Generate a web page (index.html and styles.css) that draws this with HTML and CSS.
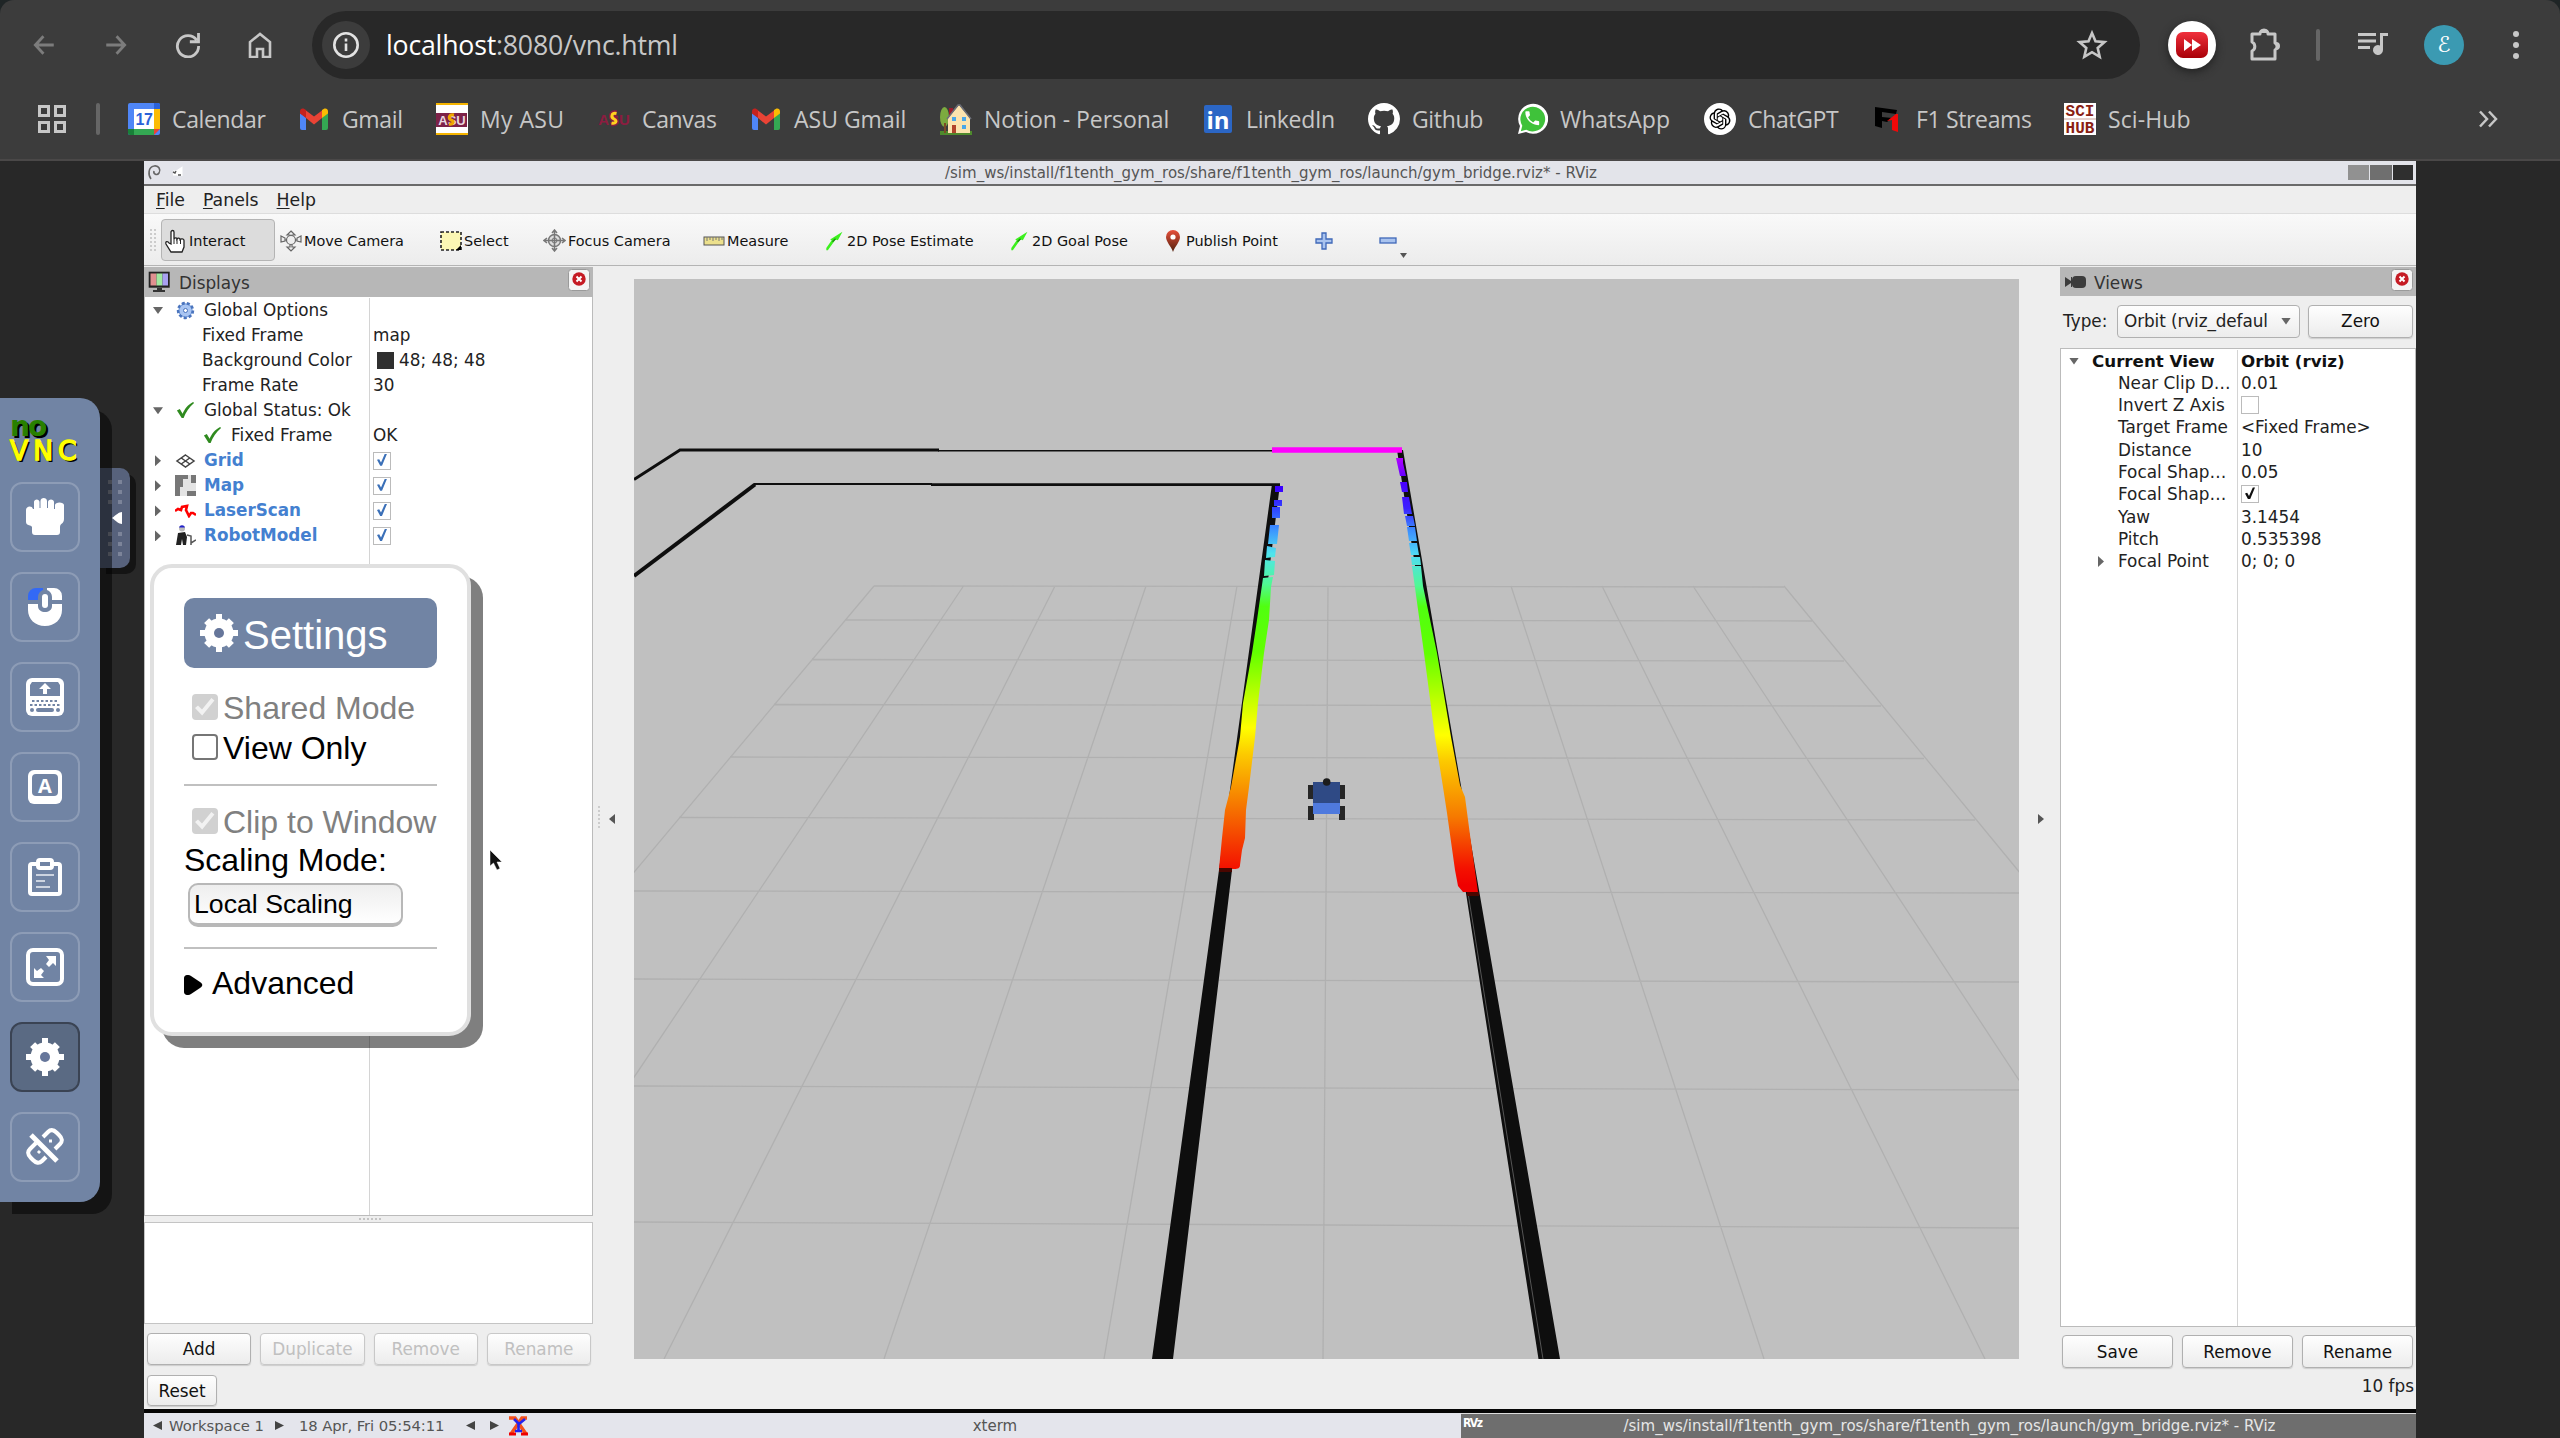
FILE: index.html
```html
<!DOCTYPE html>
<html lang="en">
<head>
<meta charset="utf-8">
<title>noVNC</title>
<link rel="stylesheet" href="styles.css">
</head>
<body>
<svg class="defs" width="0" height="0">
  <defs>
    <symbol id="gmail" viewBox="0 0 32 32">
      <path fill="#4f86f7" d="M2 10l6 4.5V27H4a2 2 0 0 1-2-2z"/>
      <path fill="#34a853" d="M24 14.500l6-4.500V25a2 2 0 0 1-2 2h-4z"/>
      <path fill="#ea4335" d="M8 7.500l8 6 8-6v7.500l-8 6.500L8 15z"/>
      <path fill="#c5221f" d="M2 8.500C2 5 5.500 4.500 8 7v8L2 10.500z"/>
      <path fill="#fbbc04" d="M30 8.500C30 5 26.500 4.500 24 7v8l6-4.500z"/>
    </symbol>
    <symbol id="gear" viewBox="0 0 38 38">
      <g fill="#fff"><rect x="16" y="0" width="6" height="38"/><rect x="0" y="16" width="38" height="6"/>
      <rect x="15.500" y="1.500" width="7" height="35" transform="rotate(45 19 19)"/><rect x="15.500" y="1.500" width="7" height="35" transform="rotate(-45 19 19)"/>
      <circle cx="19" cy="19" r="14.500"/></g>
      <circle class="gear-hole" cx="19" cy="19" r="5"/>
    </symbol>
    <symbol id="close" viewBox="0 0 22 22">
      <rect x=".5" y=".5" width="21" height="21" rx="3" fill="#f4f4f4" stroke="#9a9a9a"/>
      <circle cx="11" cy="10" r="6.700" fill="#c51b24"/><path d="M8.500 7.500l5 5m0-5l-5 5" stroke="#fff" stroke-width="2"/>
    </symbol>
    <symbol id="tick" viewBox="0 0 20 20"><path d="M1 10l3-1.500 3 5C9 8.500 12 4 18 1l1 1C14 6 10 12 8 18H6z" fill="#2f8a1f"/></symbol>
    <symbol id="arrow" viewBox="0 0 22 26"><path d="M1 22l7-10-2-1L22 1l-6 11-3-1L3 25H1z" fill="#3cf01e"/><path d="M9 14l4-4" stroke="#1f8f12" stroke-width="2"/></symbol>
  </defs>
</svg>

<header class="chrome">
  <div class="nav">
    <svg class="nav-icon dim" viewBox="0 0 24 24"><path d="M21 12H4M11.500 4L4 12l7.500 8"/></svg>
    <svg class="nav-icon dim" viewBox="0 0 24 24"><path d="M3 12h17M12.500 4L20 12l-7.500 8"/></svg>
    <svg class="nav-icon" viewBox="0 0 24 24"><path d="M20 7.500A9.800 9.800 0 1 0 21.800 13M21.700 1v8h-8"/></svg>
    <svg class="nav-icon" viewBox="0 0 24 26"><path d="M2 25V10l10-8 10 8v15h-7v-8H9v8z"/></svg>
    <div class="address">
      <span class="info"><svg width="28" height="28" viewBox="0 0 28 28" fill="none" stroke="#e3e3e3" stroke-width="2.600"><circle cx="14" cy="14" r="11.700"/><path d="M14 12.500V20M14 7.500v3"/></svg></span>
      <span class="url"><b>localhost</b>:8080/vnc.html</span>
      <svg class="star" width="32" height="32" viewBox="0 0 32 32" fill="none" stroke="#c7c7c7" stroke-width="2.600"><path d="M16 4l3.500 8.300 9 .8-6.800 5.900 2 8.800L16 23.200l-7.700 4.600 2-8.800-6.800-5.900 9-.8z"/></svg>
    </div>
    <div class="tools">
      <span class="ext"><svg width="32" height="26" viewBox="0 0 32 26"><defs><linearGradient id="yt" x2="0" y2="1"><stop stop-color="#f0303c"/><stop offset="1" stop-color="#a80008"/></linearGradient></defs><rect width="32" height="26" rx="7" fill="url(#yt)"/><path d="M8 7l8 6-8 6zM16 7l9 6-9 6z" fill="#fff"/></svg></span>
      <svg class="puzzle" width="34" height="34" viewBox="0 0 34 34"><path d="M4 7h8a4 4 0 0 1 8 0h7v9a4 4 0 0 1 0 7v9H4v-8a5 5 0 0 0 0-9z" fill="none" stroke="#c7c7c7" stroke-width="3" stroke-linejoin="round"/><path d="M12 6a4 4 0 0 1 8 0zM28 15a4 4 0 0 1 0 8z" fill="#c7c7c7"/></svg>
      <i class="bar"></i>
      <svg class="media" width="30" height="24" viewBox="0 0 30 24" fill="#c7c7c7"><path d="M0 0h18v3H0zM0 6.500h18v3H0zM0 13h12v3H0zM22 0h8v3h-5v14a5 5 0 1 1-3-4.600z"/></svg>
      <span class="avatar">ℰ</span>
      <svg class="dots" width="8" height="30" viewBox="0 0 8 30" fill="#c7c7c7"><circle cx="4" cy="4" r="3"/><circle cx="4" cy="15" r="3"/><circle cx="4" cy="26" r="3"/></svg>
    </div>
  </div>
  <nav class="bookmarks">
    <svg class="apps" width="28" height="28" viewBox="0 0 28 28" fill="none" stroke="#c7c7c7" stroke-width="3"><path d="M1.500 1.500h9v9h-9zM17.500 1.500h9v9h-9zM1.500 17.500h9v9h-9zM17.500 17.500h9v9h-9z"/></svg>
    <i class="bar"></i>
    <div class="marks">
      <a><svg viewBox="0 0 32 32"><rect width="32" height="32" rx="2" fill="#4f86f7"/><path d="M26 0h4a2 2 0 0 1 2 2v4h-6z" fill="#2b62d9"/><path d="M26 6h6v20h-6z" fill="#fbbc04"/><path d="M6 26h20v6H6z" fill="#34a853"/><path d="M0 26h6v6H2a2 2 0 0 1-2-2z" fill="#188038"/><path d="M26 26h6l-6 6z" fill="#ea4335"/><rect x="6" y="6" width="20" height="20" fill="#fff"/><text x="16" y="22" class="cal">17</text></svg>Calendar</a>
      <a><svg><use href="#gmail"/></svg>Gmail</a>
      <a><svg viewBox="0 0 32 32"><rect width="32" height="32" fill="#fff"/><path d="M0 0h32v2H0zM0 30h32v2H0z" fill="#f5b400"/><rect y="10" width="31" height="14" fill="#7d2248"/><text x="16" y="22" class="asu" fill="#e9d7df">ASU</text><path d="M18 12c-5-1-6 3-3 5 4 1 2 5-2 4" fill="none" stroke="#f0a800" stroke-width="3"/></svg>My ASU</a>
      <a><svg viewBox="0 0 32 32"><text x="16" y="22" class="asu wide" fill="#8c1d40">ASU</text><path d="M18.500 10.500c-5-1-6 3.500-2.500 5.500 4 2 1.500 5-2.500 4" fill="none" stroke="#8c1d40" stroke-width="6"/><path d="M18.500 10.500c-5-1-6 3.500-2.500 5.500 4 2 1.500 5-2.500 4" fill="none" stroke="#ffd21f" stroke-width="3"/></svg>Canvas</a>
      <a><svg><use href="#gmail"/></svg>ASU Gmail</a>
      <a><svg viewBox="0 0 32 32"><path d="M0 28h32v4H0z" fill="#4e8a2c"/><ellipse cx="4.500" cy="14" rx="4.500" ry="10" fill="#7cab3f"/><path d="M4 20h2v10H4z" fill="#7b4a26"/><path d="M9 5h4v7H9z" fill="#9c1c2c"/><path d="M8 15L19 2l11 13v15H8z" fill="#fbe3ae"/><path d="M7 16L18 2l2 0 11 14" fill="none" stroke="#6c6f78" stroke-width="1.500"/><path d="M12 14h4v4h-4zM22 14h4v4h-4zM22 22h4v4h-4z" fill="#4aa7e8"/><path d="M12 22h4v8h-4z" fill="#b0432b"/></svg>Notion - Personal</a>
      <a><svg viewBox="0 0 32 32"><rect x="2" y="2" width="28" height="28" rx="2" fill="#2b66c5"/><text x="16" y="26" class="li">in</text></svg>LinkedIn</a>
      <a><svg viewBox="0 0 16 16"><path fill="#fff" d="M8 0C3.580 0 0 3.580 0 8c0 3.540 2.290 6.530 5.470 7.590.4.070.55-.17.55-.38 0-.19-.01-.82-.01-1.490-2.010.37-2.530-.49-2.690-.94-.09-.23-.48-.94-.82-1.130-.28-.15-.68-.52-.01-.53.63-.01 1.080.58 1.230.82.72 1.210 1.870.87 2.330.66.07-.52.28-.87.51-1.070-1.780-.2-3.640-.89-3.640-3.950 0-.87.31-1.590.82-2.150-.08-.2-.36-1.020.08-2.120 0 0 .67-.21 2.200.82.64-.18 1.320-.27 2-.27s1.360.09 2 .27c1.530-1.040 2.200-.82 2.200-.82.44 1.100.16 1.920.08 2.120.51.56.82 1.270.82 2.150 0 3.070-1.870 3.750-3.650 3.950.29.25.54.73.54 1.480 0 1.070-.01 1.930-.01 2.200 0 .21.15.46.55.38A8.010 8.010 0 0 0 16 8c0-4.420-3.580-8-8-8z"/></svg>Github</a>
      <a><svg viewBox="0 0 32 32"><path d="M2 31l2-8A15 15 0 1 1 10 29z" fill="#fff"/><path d="M4.800 28.200l1.500-5.500A12.400 12.400 0 1 1 10.400 26.700z" fill="#3fc23a"/><path transform="translate(7 6) scale(.77)" fill="#fff" d="M6.620 10.790c1.440 2.830 3.760 5.140 6.590 6.590l2.200-2.200c.27-.27.67-.36 1.020-.24 1.120.37 2.330.57 3.570.57.55 0 1 .45 1 1V20c0 .55-.45 1-1 1-9.390 0-17-7.610-17-17 0-.55.45-1 1-1h3.500c.55 0 1 .45 1 1 0 1.250.2 2.450.57 3.570.11.35.03.74-.25 1.020z"/></svg>WhatsApp</a>
      <a><svg viewBox="0 0 32 32"><circle cx="16" cy="16" r="16" fill="#fff"/><path transform="translate(5.500 5.500) scale(.875)" d="M22.2819 9.8211a5.9847 5.9847 0 0 0-.5157-4.9108 6.0462 6.0462 0 0 0-6.5098-2.9A6.0651 6.0651 0 0 0 4.9807 4.1818a5.9847 5.9847 0 0 0-3.9977 2.9 6.0462 6.0462 0 0 0 .7427 7.0966 5.98 5.98 0 0 0 .511 4.9107 6.051 6.051 0 0 0 6.5146 2.9001A5.9847 5.9847 0 0 0 13.2599 24a6.0557 6.0557 0 0 0 5.7718-4.2058 5.9894 5.9894 0 0 0 3.9977-2.9001 6.0557 6.0557 0 0 0-.7475-7.0729zm-9.022 12.6081a4.4755 4.4755 0 0 1-2.8764-1.0408l.1419-.0804 4.7783-2.7582a.7948.7948 0 0 0 .3927-.6813v-6.7369l2.02 1.1686a.071.071 0 0 1 .038.052v5.5826a4.504 4.504 0 0 1-4.4945 4.4944zm-9.6607-4.1254a4.4708 4.4708 0 0 1-.5346-3.0137l.142.0852 4.783 2.7582a.7712.7712 0 0 0 .7806 0l5.8428-3.3685v2.3324a.0804.0804 0 0 1-.0332.0615L9.74 19.9502a4.4992 4.4992 0 0 1-6.1408-1.6464zM2.3408 7.8956a4.485 4.485 0 0 1 2.3655-1.9728V11.6a.7664.7664 0 0 0 .3879.6765l5.8144 3.3543-2.0201 1.1685a.0757.0757 0 0 1-.071 0l-4.8303-2.7865A4.504 4.504 0 0 1 2.3408 7.872zm16.5963 3.8558L13.1038 8.364 15.1192 7.2a.0757.0757 0 0 1 .071 0l4.8303 2.7913a4.4944 4.4944 0 0 1-.6765 8.1042v-5.6772a.79.79 0 0 0-.407-.667zm2.0107-3.0231l-.142-.0852-4.7735-2.7818a.7759.7759 0 0 0-.7854 0L9.409 9.2297V6.8974a.0662.0662 0 0 1 .0284-.0615l4.8303-2.7866a4.4992 4.4992 0 0 1 6.6802 4.66zM8.3065 12.863l-2.02-1.1638a.0804.0804 0 0 1-.038-.0567V6.0742a4.4992 4.4992 0 0 1 7.3757-3.4537l-.142.0805L8.704 5.459a.7948.7948 0 0 0-.3927.6813zm1.0976-2.3654l2.602-1.4998 2.6069 1.4998v2.9994l-2.5974 1.4997-2.6067-1.4997Z"/></svg>ChatGPT</a>
      <a><svg viewBox="0 0 32 32"><path d="M3 4l22 3-1 4-14-2v5l10 1-5 4-5-1v7l-7-2z" fill="#000"/><path d="M15 18l9-7h2v18l-6-2V17z" fill="#f00808"/></svg>F1 Streams</a>
      <a><svg viewBox="0 0 32 32"><rect width="32" height="32" fill="#fff"/><path d="M0 16h32" stroke="#caa29a"/><text x="16" y="12.500" class="sci">SCI</text><text x="16" y="30" class="sci">HUB</text></svg>Sci-Hub</a>
    </div>
    <svg class="more" width="20" height="18" viewBox="0 0 20 18" fill="none" stroke="#c7c7c7" stroke-width="2.500"><path d="M2 1.500L9 9l-7 7.500M11 1.500L18 9l-7 7.500"/></svg>
  </nav>
</header>

<main class="viewport">
  <div class="desktop">
    <div class="titlebar">
      <svg class="debian" width="46" height="20" viewBox="0 0 46 20" fill="none"><path d="M4 16C1 12 1 4 7 3c5-1 7 4 5 7-2 3-6 1-5-2" stroke="#666" stroke-width="1.600"/><path d="M26 10h4l3-2v5" stroke="#fff" stroke-width="5"/><path d="M26 9l2 1 1-2M31 12h3" stroke="#555" stroke-width="1.400"/></svg>
      <span>/sim_ws/install/f1tenth_gym_ros/share/f1tenth_gym_ros/launch/gym_bridge.rviz* - RViz</span>
      <div class="winbtns"><i></i><i></i><i></i></div>
    </div>
    <div class="menubar"><span><u>F</u>ile</span><span><u>P</u>anels</span><span><u>H</u>elp</span></div>
    <div class="toolbar">
      <i class="grip"></i>
      <span class="tool on t1"><svg width="23" height="24" viewBox="0 0 23 24"><path d="M7 15V3c0-2 3-2 3 0v7c1-2 3-1 3 0 1-1.500 3-1 3 .5 1-1 4-1 4 1V18l-2 5H7L2 15c-1-3 2-3 3-1z" fill="#fff" stroke="#222" stroke-width="1.300"/><path d="M10 10v5M13 10v5M16.500 11v4" stroke="#222"/></svg>Interact</span>
      <span class="tool t2"><svg width="22" height="22" viewBox="0 0 22 22" fill="#eee" stroke="#666" stroke-width="1.200"><path d="M11 1l4 4h-3v12h3l-4 4-4-4h3V5H7zM1 6l4 2v2h12V8l4-2v6l-4-1v-1H5v1l-4 1z"/><circle cx="11" cy="10" r="4.500"/></svg>Move Camera</span>
      <span class="tool t3"><svg width="22" height="20" viewBox="0 0 22 20"><rect x="1" y="1" width="20" height="18" fill="#fbf7b4" stroke="#222" stroke-width="1.600" stroke-dasharray="3 2"/><path d="M21 14v5h-5z"/></svg>Select</span>
      <span class="tool t4"><svg width="23" height="23" viewBox="0 0 23 23" fill="none" stroke="#777"><circle cx="11.500" cy="11.500" r="6" stroke-width="1.500" fill="#ddd"/><path d="M11.500 1v21M1 11.500h21M9 4l2.500-3L14 4M9 19l2.500 3 2.500-3M4 9l-3 2.500L4 14M19 9l3 2.500-3 2.500" stroke-width="1.500"/><circle cx="11.500" cy="11.500" r="2.500"/></svg>Focus Camera</span>
      <span class="tool t5"><svg width="22" height="12" viewBox="0 0 22 12"><rect x="1" y="2" width="20" height="8" fill="#ece08c" stroke="#555"/><path d="M4 2v4M7 2v3M10 2v4M13 2v3M16 2v4M19 2v3" stroke="#777"/></svg>Measure</span>
      <span class="tool t6"><svg width="22" height="20"><use href="#arrow"/></svg>2D Pose Estimate</span>
      <span class="tool t7"><svg width="22" height="20"><use href="#arrow"/></svg>2D Goal Pose</span>
      <span class="tool t8"><svg width="16" height="22" viewBox="0 0 16 22"><defs><linearGradient id="pin" x2="0" y2="1"><stop stop-color="#e8503c"/><stop offset="1" stop-color="#50200c"/></linearGradient></defs><path d="M8 22C6 16 1 12 1 7a7 7 0 0 1 14 0c0 5-5 9-7 15z" fill="url(#pin)"/><circle cx="8" cy="7" r="2.600" fill="#fff"/></svg>Publish Point</span>
      <span class="tool t9"><svg width="18" height="18" viewBox="0 0 18 18"><path d="M7 1h4v6h6v4h-6v6H7v-6H1V7h6z" fill="#a9c3ee" stroke="#3f68b8" stroke-width="1.300"/></svg></span>
      <span class="tool t10"><svg width="28" height="36" viewBox="0 0 28 36"><rect x="1" y="15" width="16" height="5" fill="#a9c3ee" stroke="#3f68b8" stroke-width="1.300"/><path d="M22 30h7l-3.500 5z" transform="translate(-1 0)" fill="#555"/></svg></span>
    </div>

    <div class="body">
      <section class="dock left">
        <div class="dock-head"><svg width="23" height="22" viewBox="0 0 23 22"><rect x=".7" y=".7" width="21" height="16" fill="#222"/><path d="M2.500 2.500h6v12h-6z" fill="#e09090"/><path d="M8.500 2.500h6v12h-6z" fill="#a0e8a0"/><path d="M14.500 2.500h5.500v12h-5.500z" fill="#a8a0f0"/><path d="M9 17h5v2h3v2H5v-2h4z" fill="#333"/></svg><span>Displays</span><svg class="x" width="22" height="22"><use href="#close"/></svg></div>
        <div class="tree displays">
          <div class="row"><div class="name l0"><i class="down"></i><svg width="19" height="19" viewBox="0 0 19 19"><circle cx="9.500" cy="9.500" r="7.200" fill="#7ba2e0" stroke="#4a74bd" stroke-width="3" stroke-dasharray="3 2"/><circle cx="9.500" cy="9.500" r="6" fill="#a9c5f2"/><circle cx="9.500" cy="9.500" r="2" fill="#fff" stroke="#4a74bd"/></svg>Global Options</div><div></div></div>
          <div class="row"><div class="name l1">Fixed Frame</div><div>map</div></div>
          <div class="row"><div class="name l1">Background Color</div><div><i class="swatch"></i>48; 48; 48</div></div>
          <div class="row"><div class="name l1">Frame Rate</div><div>30</div></div>
          <div class="row"><div class="name l0"><i class="down"></i><svg width="19" height="19"><use href="#tick"/></svg>Global Status: Ok</div><div></div></div>
          <div class="row"><div class="name l2"><svg width="19" height="19"><use href="#tick"/></svg>Fixed Frame</div><div>OK</div></div>
          <div class="row key"><div class="name l0"><i class="right"></i><svg width="21" height="14" viewBox="0 0 21 14" fill="none" stroke="#444" stroke-width="1.500"><path d="M10.500 1L19 7l-8.500 6L2 7zM6.300 4l8.500 6M14.700 4l-8.500 6"/></svg>Grid</div><div><i class="cb"></i></div></div>
          <div class="row key"><div class="name l0"><i class="right"></i><svg width="21" height="21" viewBox="0 0 21 21"><rect width="21" height="21" fill="#e4e4e4"/><path d="M0 0h13v4H8v8H5v9H0zM16 0h5v8h-5zM12 16h9v5h-9z" fill="#777"/></svg>Map</div><div><i class="cb"></i></div></div>
          <div class="row key"><div class="name l0"><i class="right"></i><svg width="21" height="14" viewBox="0 0 21 14" fill="none" stroke="#f00" stroke-width="2.600"><path d="M0 7l3-2 3 1 1-3 5-1-1 4 3 6 2-3h2l3 2"/></svg>LaserScan</div><div><i class="cb"></i></div></div>
          <div class="row key"><div class="name l0"><i class="right"></i><svg width="21" height="21" viewBox="0 0 21 21"><circle cx="7" cy="3.500" r="3" fill="#bbb"/><path d="M4 2.500C5-.5 9-.5 10 2.500z" fill="#22c"/><path d="M3 8l7-1 2 5-1 8H8l-1-6-1 6H1z" fill="#222"/><path d="M12 10l4 1v9M16 18l5-3" stroke="#555" stroke-width="1.500" fill="none"/></svg>RobotModel</div><div><i class="cb"></i></div></div>
          <div class="row fill"><div></div><div></div></div>
        </div>
        <div class="split-h"></div>
        <div class="help"></div>
        <div class="buttons"><button>Add</button><button disabled>Duplicate</button><button disabled>Remove</button><button disabled>Rename</button></div>
      </section>

      <div class="gutter"><i class="dotcol"></i><i class="tri-l"></i></div>

      <svg class="scene" viewBox="634 279 1385 1080">
        <defs>
          <linearGradient id="scanL" gradientUnits="userSpaceOnUse" x1="0" y1="489" x2="0" y2="868">
            <stop offset="0" stop-color="#3a00ff"/><stop offset=".06" stop-color="#3050ff"/><stop offset=".11" stop-color="#3c96ff"/><stop offset=".17" stop-color="#50e4ee"/><stop offset=".25" stop-color="#50f896"/><stop offset=".31" stop-color="#50ff10"/><stop offset=".43" stop-color="#62ff00"/><stop offset=".55" stop-color="#c0ff00"/><stop offset=".63" stop-color="#ff0"/><stop offset=".7" stop-color="#fcca00"/><stop offset=".83" stop-color="#f67a00"/><stop offset="1" stop-color="#f41200"/>
          </linearGradient>
          <linearGradient id="scanR" gradientUnits="userSpaceOnUse" x1="0" y1="457" x2="0" y2="885">
            <stop offset="0" stop-color="#b800ff"/><stop offset=".06" stop-color="#4a00ff"/><stop offset=".12" stop-color="#3c20ff"/><stop offset=".17" stop-color="#3c8cff"/><stop offset=".23" stop-color="#50dcf4"/><stop offset=".3" stop-color="#50f896"/><stop offset=".35" stop-color="#50ff10"/><stop offset=".46" stop-color="#62ff00"/><stop offset=".57" stop-color="#c0ff00"/><stop offset=".65" stop-color="#ff0"/><stop offset=".71" stop-color="#fcca00"/><stop offset=".84" stop-color="#f67a00"/><stop offset=".96" stop-color="#f41200"/><stop offset="1" stop-color="#f00000"/>
          </linearGradient>
        </defs>
        <rect x="634" y="279" width="1385" height="1080" fill="#c0c0c0"/>
        <path class="gridlines" d="M874 586L1784 587M845 620L1812 621M812 659.500L1844 661M774 704.500L1881 706M730 757L1924 758.500M679 817.500L1975 820M634 891L2019 893M634 979L2019 982M634 1086L2019 1090M634 1222L2019 1228M874 586L226 1359M963.500 586L445 1359M1055 586L664 1359M1146 586L884 1359M1237 586L1104 1359M1328 586L1323 1359M1419.500 586L1543 1359M1511 586L1764 1359M1602 586L1985 1359M1693 586L2203 1359M1784 586L2420 1359"/>
        <g fill="none" stroke="#0e0e0e">
          <path d="M634 479.500L680 450H939" stroke-width="3"/><path d="M938 450.700H1273" stroke-width="1.500"/>
          <path d="M634 576L755 484.500" stroke-width="4"/><path d="M754 484H932" stroke-width="1.800"/><path d="M931 484.600H1280" stroke-width="2.600"/>
        </g>
        <path d="M1272 484h8L1232 870 1173 1359H1152L1219 870zM1397 450h6L1560 1359H1538.500z" fill="#0e0e0e"/>
        <path d="M1468 893L1543 1359" stroke="#555" stroke-width="1"/>
        <path d="M1272 450H1402" stroke="#f0f" stroke-width="5.500"/>
        <path d="M1275 486h8v6h-8zM1274 500h8v6h-8zM1272 507h8v11h-8zM1270 525h9L1277 544H1268zM1267 546L1276 548 1275 557 1266 558zM1265 560L1275 561 1274 575 1264 576zM1263 578L1273 577 1271 587 1269 620 1264 653 1258 703 1255 737 1249 787 1246 810 1245 838 1242 850 1240 865C1240 868 1238 869 1234 869H1219L1222 838 1225 810 1231 787 1240 737 1243 703 1252 653 1257 620z" fill="url(#scanL)"/>
        <path d="M1219 868h13v4h-13z" fill="#4a0600"/>
        <path d="M1396 458h7v5l3 13h-6zM1400 482h7l1 10h-6zM1402 497h7l3 17h-8zM1405 516h8l2 10h-8zM1407 527h8l2 14h-8zM1409 543h8l2 12h-8zM1411 557h9l1 8h-9zM1412 566h9l2 20 14 67 14 84 9 48 5 12 5 38 8 57h-15l-5-6-3-16-8-57-4-26-8-50-11-84z" fill="url(#scanR)"/>
        <path d="M1467 892h12v4h-12z" fill="#4a0600"/>
        <g fill="#262626"><rect x="1308" y="785" width="7" height="14"/><rect x="1339" y="785" width="6" height="14"/><rect x="1308" y="806" width="6" height="14"/><rect x="1339" y="806" width="6" height="14"/></g>
        <rect x="1313" y="782" width="27" height="32" fill="#4f7ade"/><rect x="1313" y="782" width="27" height="21" fill="#2f4a85"/><circle cx="1326.700" cy="782" r="3.800" fill="#1c1c1c"/>
      </svg>

      <div class="gutter"><i class="tri-r"></i></div>

      <section class="dock rightdock">
        <div class="dock-head"><svg width="22" height="12" viewBox="0 0 22 12" fill="#3c3c3c"><path d="M0 1l6 4V1h1v10H6V7l-6 4z"/><rect x="7" width="14" height="12" rx="4"/></svg><span>Views</span><svg class="x" width="22" height="22"><use href="#close"/></svg></div>
        <div class="type"><span>Type:</span><div class="combo"><span>Orbit (rviz_defaul</span><i class="down"></i></div><button>Zero</button></div>
        <div class="tree views">
          <div class="row bold"><div class="name v0"><i class="down"></i>Current View</div><div>Orbit (rviz)</div></div>
          <div class="row"><div class="name v1">Near Clip D…</div><div>0.01</div></div>
          <div class="row"><div class="name v1">Invert Z Axis</div><div><i class="cb empty"></i></div></div>
          <div class="row"><div class="name v1">Target Frame</div><div>&lt;Fixed Frame&gt;</div></div>
          <div class="row"><div class="name v1">Distance</div><div>10</div></div>
          <div class="row"><div class="name v1">Focal Shap…</div><div>0.05</div></div>
          <div class="row"><div class="name v1">Focal Shap…</div><div><i class="cb black"></i></div></div>
          <div class="row"><div class="name v1">Yaw</div><div>3.1454</div></div>
          <div class="row"><div class="name v1">Pitch</div><div>0.535398</div></div>
          <div class="row"><div class="name v2"><i class="right"></i>Focal Point</div><div>0; 0; 0</div></div>
          <div class="row fill"><div></div><div></div></div>
        </div>
        <div class="buttons"><button>Save</button><button>Remove</button><button>Rename</button></div>
      </section>
    </div>
    <div class="status"><button>Reset</button><span>10 fps</span></div>
    <div class="taskbar">
      <div class="task-left"><i class="al"></i><span class="ws">Workspace 1</span><i class="ar"></i><span class="date">18 Apr, Fri 05:54:11</span><i class="al"></i><i class="ar"></i><svg width="21" height="20" viewBox="0 0 21 20"><path d="M1 2h6l11 16M19 2h-5L3 18" stroke="#f4501c" stroke-width="3.500" fill="none"/><path d="M1 18h7M13 18h7" stroke="#e00" stroke-width="3"/><path d="M6 3l5 5 6-5M10.500 6v9M7 15h7" stroke="#2222f0" stroke-width="2.600" fill="none"/></svg></div>
      <div class="task xterm">xterm</div>
      <div class="task active"><em>RVz</em><span>/sim_ws/install/f1tenth_gym_ros/share/f1tenth_gym_ros/launch/gym_bridge.rviz* - RViz</span></div>
    </div>
  </div>

  <aside class="control">
    <div class="handle"><svg width="30" height="100" viewBox="0 0 30 100"><path d="M8 12h4v4H8zM8 22h4v4H8zM8 32h4v4H8zM8 64h4v4H8zM8 74h4v4H8zM8 84h4v4H8z" fill="#8a90a0"/><path d="M18 12h4v4h-4zM18 22h4v4h-4zM18 32h4v4h-4zM18 64h4v4h-4zM18 74h4v4h-4zM18 84h4v4h-4z" fill="#7c8499"/><path d="M22 44v12c-3 0-6-3-10-6 4-3 7-6 10-6z" fill="#fff"/></svg></div>
    <div class="bar-panel">
      <div class="logo"><span class="no">no</span><span class="vnc">VNC</span></div>
      <div class="vbtn"><svg width="38" height="38" viewBox="0 0 38 38"><path d="M0 12c0-4 6-5 7-1h1V4c0-3.500 5.500-3.500 5.500 0v6h1V3c0-4 6.500-4 6.500 0v7h1V4c0-3.500 6-3.500 6 0v7h1V7c0-3.500 9-3.500 9 0v14c0 5-4 4-4 8v5c0 2-1 3-3 3H9c-2 0-3-1-3-3v-5c0-2-6-1-6-5z" fill="#fff"/></svg></div>
      <div class="vbtn"><svg width="34" height="38" viewBox="0 0 34 38"><path d="M0 12V8a8 8 0 0 1 8-8h7v2c-3 1-5 4-5 7v3z" fill="#3369f5"/><path d="M19 0h7a8 8 0 0 1 8 8v4H24V9c0-3-2-6-5-7z" fill="#fff"/><rect x="14" y="6" width="6" height="14" rx="3" fill="#fff"/><path d="M0 16h10v2c0 8 14 8 14 0v-2h10v6c0 9-7 16-17 16S0 31 0 22z" fill="#fff"/></svg></div>
      <div class="vbtn"><svg width="38" height="38" viewBox="0 0 38 38"><rect width="38" height="38" rx="6" fill="#fff"/><path d="M6 4h26l2 3v11H4V7z" fill="#7184a4"/><path d="M19 5l6 6h-4v5h-4v-5h-4z" fill="#fff"/><g stroke="#7184a4" stroke-width="2"><path d="M6 23h26" stroke-dasharray="2.500 2"/><path d="M4 27h30" stroke-dasharray="2.500 2"/></g><rect x="10" y="30" width="18" height="4" rx="2" fill="#7184a4"/><circle cx="6" cy="32" r="2" fill="#7184a4"/><circle cx="32" cy="32" r="2" fill="#7184a4"/></svg></div>
      <div class="vbtn"><svg width="34" height="34" viewBox="0 0 34 34"><rect width="34" height="34" rx="6" fill="#fff"/><rect x="4" y="4" width="26" height="22" rx="4" fill="#7184a4"/><text x="17" y="22.500" class="keya">A</text></svg></div>
      <div class="vbtn"><svg width="34" height="38" viewBox="0 0 34 38"><rect x="2" y="6" width="30" height="30" rx="2" fill="none" stroke="#fff" stroke-width="4"/><rect x="10" y="2" width="14" height="8" rx="2" fill="#7184a4" stroke="#fff" stroke-width="4"/><path d="M8 17h18M8 23h9M8 29h14" stroke="#cdd4e0" stroke-width="2"/></svg></div>
      <div class="vbtn"><svg width="38" height="38" viewBox="0 0 38 38"><rect x="2" y="2" width="34" height="34" rx="5" fill="none" stroke="#fff" stroke-width="4"/><path d="M20 8h10v10l-3-3-4 4-3-3 3-4zM18 30H8V20l3 3 4-3 3 3-3 4z" fill="#fff"/></svg></div>
      <div class="vbtn on"><svg width="38" height="38"><use href="#gear"/></svg></div>
      <div class="vbtn"><svg width="38" height="38" viewBox="0 0 38 38" fill="none" stroke="#fff" stroke-width="4"><path d="M17 9l5-5c3-3 6-2 9 1l2 2c3 3 4 6 1 9l-5 5M10 15l-6 6c-3 3-2 6 1 9l2 2c3 3 6 4 9 1l4-4"/><path d="M5 7l26 26" stroke-width="5"/><path d="M23 13h3M14 23l-2 2" stroke-width="3"/></svg></div>
    </div>
  </aside>

  <section class="settings">
    <h1><svg width="38" height="38"><use href="#gear"/></svg>Settings</h1>
    <label class="off"><i class="box on"></i>Shared Mode</label>
    <label><i class="box"></i>View Only</label>
    <hr>
    <label class="off clip"><i class="box on"></i>Clip to Window</label>
    <div class="mode">Scaling Mode:</div>
    <div class="select">Local Scaling</div>
    <hr class="second">
    <div class="advanced"><svg width="20" height="20" viewBox="0 0 20 20"><path d="M0 3C0 0 4-1 7 1l9 6c3 2 3 4 0 6l-9 6c-3 2-7 1-7-2z"/></svg>Advanced</div>
  </section>
  <svg class="cursor" width="14" height="22" viewBox="0 0 14 22"><path d="M1 1v16l3.500-3 3.500 7 3-1.500-3-6.500h5z" fill="#111" stroke="#fff" stroke-width=".5"/></svg>
</main>
</body>
</html>
```
FILE: styles.css
```css
* { box-sizing: border-box; }
body { margin: 0; width: 2560px; height: 1438px; overflow: hidden; background: #282828; font-family: "DejaVu Sans", sans-serif; display: flex; flex-direction: column; }
.defs { position: absolute; }
svg { flex: none; }
i { font-style: normal; display: inline-block; flex: none; }

/* browser toolbar */
.chrome { height: 161px; flex: none; background: #3c3c3c; border-bottom: 2px solid #4a4848; font-family: "Open Sans", "Noto Sans", sans-serif; color: #c7c7c7; border-radius: 14px 14px 0 0; box-shadow: 0 -20px 0 20px #1f2526; }
.nav { height: 90px; display: flex; align-items: center; padding-left: 31px; }
.nav-icon { width: 26px; height: 26px; margin-right: 46px; fill: none; stroke: #c7c7c7; stroke-width: 2.600; }
.nav-icon.dim { stroke: #7c7c7c; }
.nav-icon:nth-child(4) { margin-right: 39px; }
.address { width: 1828px; height: 68px; border-radius: 34px; background: #282828; display: flex; align-items: center; padding: 0 32px 0 10px; }
.info { width: 48px; height: 48px; border-radius: 50%; background: #3c3c3c; display: flex; align-items: center; justify-content: center; margin-right: 16px; }
.url { font-size: 26.700px; letter-spacing: -.2px; flex: 1; line-height: 40px; }
.url b { font-weight: 400; color: #fff; }
.tools { display: flex; align-items: center; }
.ext { width: 48px; height: 48px; border-radius: 50%; background: #fff; margin-left: 28px; display: flex; align-items: center; justify-content: center; box-shadow: 0 3px 8px #222; }
.puzzle { margin: -3px 0 0 32px; }
.bar { width: 4px; height: 32px; border-radius: 2px; background: #666; }
.tools .bar { margin-left: 34px; }
.media { margin-left: 38px; }
.avatar { width: 40px; height: 40px; border-radius: 50%; background: #3b9ab2; color: #fff; margin-left: 36px; text-align: center; font: 22px/39px "DejaVu Sans", serif; }
.dots { margin-left: 48px; }
.bookmarks { height: 58px; display: flex; align-items: center; padding-left: 38px; font-size: 23px; letter-spacing: -.35px; }
.bookmarks > .bar { margin: 0 28px 0 30px; }
.marks { display: grid; grid-template-columns: 170px 138px 162px 152px 190px 262px 166px 148px 188px 168px 192px 414px; }
.marks a { display: flex; align-items: center; gap: 12px; white-space: nowrap; line-height: 31px; }
.marks a:nth-child(3) { letter-spacing: .4px; }
.marks a:nth-child(5) { letter-spacing: 0; }
.marks a:nth-child(6) { letter-spacing: -.05px; }
.marks a:nth-child(9) { letter-spacing: 0; }
.marks a:nth-child(12) { letter-spacing: .1px; }
.marks svg { width: 32px; height: 32px; }
.cal { font: 700 16px "Liberation Sans", sans-serif; text-anchor: middle; fill: #2b62d9; letter-spacing: -.5px; }
.asu { font: 700 13px "Liberation Sans", sans-serif; text-anchor: middle; letter-spacing: 0; }
.asu.wide { font-size: 15px; }
.li { font: 700 24px "Open Sans", sans-serif; text-anchor: middle; fill: #fff; letter-spacing: 0; }
.sci { font: 700 16px "Liberation Mono", monospace; text-anchor: middle; fill: #8a1f14; letter-spacing: 0; }

/* remote desktop */
.viewport { flex: 1; position: relative; padding-left: 144px; }
.desktop { width: 2272px; height: 1277px; background: #eee; display: flex; flex-direction: column; color: #222; font-size: 16.850px; }
.titlebar { height: 25px; flex: none; background: #e3e4ea; border-bottom: 2px solid #6a6a6a; display: flex; align-items: center; justify-content: space-between; font-size: 15px; color: #555; }
.titlebar span { margin-right: 21px; }
.debian { margin: 0 22px 0 3px; }
.winbtns { display: flex; gap: 1px; width: 68px; }
.winbtns i { width: 21.500px; height: 15px; background: #919191; margin-top: -1px; }
.winbtns i:nth-child(2) { background: #6f6f6f; }
.winbtns i:nth-child(3) { background: #2f2f2f; width: 20px; }
.menubar { height: 28px; flex: none; display: flex; gap: 18px; padding-left: 12px; line-height: 28px; font-size: 17.300px; border-bottom: 1px solid #ddd; }
.menubar u { text-underline-offset: 2px; }
.toolbar { height: 52px; flex: none; background: linear-gradient(#f9f9f9, #ececec); border-bottom: 1.500px solid #b4b4b4; display: flex; align-items: center; font-size: 14.450px; color: #111; padding-left: 5px; }
.grip { width: 7px; height: 24px; background: radial-gradient(#ccc 1px, transparent 1.400px) 0 0 / 4px 4px; margin-right: 5px; }
.tool { display: flex; align-items: center; gap: 2px; height: 42px; white-space: nowrap; flex: none; padding-top: 2px; }
.tool.on { background: #dcdcdc; border: 1px solid #b4b4b4; border-radius: 4px; padding-left: 2px; }
.t1 { width: 114px; margin-right: 5px; }
.t2 { width: 160px; }
.t3 { width: 103px; }
.t4 { width: 160px; }
.t5 { width: 120px; }
.t6 { width: 185px; }
.t7 { width: 157px; }
.t8 { width: 150px; gap: 5px; }
.t9 { width: 64px; }
.body { height: 1101px; flex: none; display: flex; }
.dock { display: flex; flex-direction: column; padding-top: 1px; }
.left { width: 449px; }
.rightdock { width: 356px; }
.dock-head { height: 30px; flex: none; background: #b7b7b7; display: flex; align-items: center; padding: 0 3px 0 4px; gap: 8px; color: #333; }
.dock-head span { flex: 1; padding-top: 2px; }
.dock-head .x { margin-top: -4px; }
.rightdock .dock-head { height: 29px; padding-left: 5px; gap: 7px; }
.tree { background: #fff; border: 1px solid #bbb; border-top-width: 0; display: flex; flex-direction: column; }
.displays { height: 919px; flex: none; padding-top: 1px; }
.row { display: grid; grid-template-columns: 225px 1fr; height: 25.050px; line-height: 25px; flex: none; white-space: nowrap; }
.row > div { display: flex; align-items: center; padding-left: 3px; }
.row > div:first-child { border-right: 1px solid #d4d4d4; }
.row.fill { flex: 1; height: auto; }
.row .name svg { flex: none; }
.name.l0 { padding-left: 8px !important; }
.name.l0 svg, .name.l2 svg { width: 21px; margin-right: 8px; }
.name.l0 i { margin-right: 12px; }
.name.l1 { padding-left: 57px !important; }
.name.l2 { padding-left: 57px !important; }
.row.key .name { font-weight: 700; color: #4480d0; font-size: 16.800px; }
.down { width: 10px; height: 7px; background: #666; clip-path: polygon(0 0, 100% 0, 50% 100%); }
.right { width: 6px; height: 11px; background: #666; clip-path: polygon(0 0, 100% 50%, 0 100%); margin-left: 2px; }
.right + svg { margin-left: 2px; }
.swatch { width: 17px; height: 17px; background: #2f2f2f; margin: 0 5px 0 4px; }
.cb { width: 18px; height: 18px; border: 1.500px solid #bbb; background: #fff; position: relative; }
.cb::after { content: ""; position: absolute; left: 3px; top: 1px; width: 10px; height: 12px; background: #3b70b8; clip-path: polygon(0 50%, 22% 45%, 40% 72%, 78% 0, 100% 0, 50% 100%, 32% 100%); }
.cb.black::after { background: #111; }
.cb.empty::after { display: none; }
.split-h { height: 6px; flex: none; background: radial-gradient(#c4c4c4 1px, transparent 1.400px) 0 1px / 4px 4px repeat-x; width: 24px; margin-left: 214px; }
.help { height: 102px; flex: none; background: #fff; border: 1.500px solid #c4c4c4; }
.buttons { display: flex; gap: 9px; padding: 9px 2px 0 3px; }
button { font: inherit; color: #111; background: linear-gradient(#fefefe, #ececec); border: 1px solid #b0b0b0; border-radius: 4px; height: 32px; padding: 0; box-shadow: 0 1px 1px #ccc; }
.buttons button { flex: 1; }
button:disabled { color: #c0c0c0; border-color: #c8c8c8; }
.gutter { width: 41px; display: flex; align-items: center; }
.dotcol { width: 4px; height: 24px; margin-left: 4px; background: radial-gradient(#ccc 1px, transparent 1.400px) 0 0 / 4px 4px; }
.tri-l, .tri-r { width: 6px; height: 10px; background: #555; margin: 5px 0 0 8px; }
.tri-l { clip-path: polygon(100% 0, 0 50%, 100% 100%); }
.tri-r { clip-path: polygon(0 0, 100% 50%, 0 100%); margin-left: 19px; }
.scene { width: 1385px; height: 1080px; margin-top: 13px; }
.gridlines { fill: none; stroke: #b0b0b0; stroke-width: 1.300; }
.type { height: 52px; flex: none; display: flex; align-items: center; padding: 0 3px 2px; }
.type > span { width: 54px; }
.combo { width: 183px; height: 33px; border: 1px solid #b0b0b0; border-radius: 4px; background: linear-gradient(#fefefe, #ececec); display: flex; align-items: center; padding-left: 6px; margin-right: 8px; }
.combo span { width: 148px; white-space: nowrap; margin-right: 9px; letter-spacing: -.1px; }
.type button { width: 105px; height: 33px; }
.views { height: 979px; flex: none; border-top-width: 1px; padding-top: 1px; }
.views .row { grid-template-columns: 177px 1fr; height: 22.350px; line-height: 22px; }
.views .row.bold { height: 21.500px; }
.views .row.fill { height: auto; }
.bold { font-weight: 700; font-size: 16.700px; color: #111; }
.name.v0 { padding-left: 8px !important; }
.name.v0 i { margin-right: 13px; }
.name.v1 { padding-left: 57px !important; }
.name.v2 { padding-left: 35px !important; }
.name.v2 i { margin-right: 14px; }
.rightdock .buttons { padding: 8px 3px 0 2px; }
.rightdock .buttons button { height: 33px; }
.status { flex: none; height: 42px; display: flex; justify-content: space-between; align-items: flex-start; padding: 8px 2px 0 3px; }
.status button { width: 70px; height: 31px; }
.status span { line-height: 22px; }
.taskbar { flex: 1; border-top: 4px solid #050505; background: #e4e5ec; display: flex; align-items: center; font-size: 15px; color: #555; }
.task-left { width: 535px; display: flex; align-items: center; padding-left: 9px; }
.al, .ar { width: 9px; height: 9px; background: #444; }
.al { clip-path: polygon(100% 0, 0 50%, 100% 100%); }
.ar { clip-path: polygon(0 0, 100% 50%, 0 100%); }
.ws { width: 97px; margin: 0 9px 0 7px; white-space: nowrap; font-size: 14.800px; }
.date { width: 151px; margin: 0 16px 0 15px; white-space: nowrap; font-size: 14.800px; letter-spacing: -.1px; }
.task-left .al + .ar { margin: 0 9px 0 15px; }
.task { height: 100%; display: flex; align-items: center; justify-content: center; }
.xterm { width: 782px; padding-right: 150px; }
.active { background: #6e6e6e; color: #e6e6e6; width: 955px; border-top: 1px solid #ddd; justify-content: flex-start; }
.active em { font: 700 12px "DejaVu Sans Condensed", "DejaVu Sans", sans-serif; letter-spacing: -1.500px; color: #fff; width: 22px; padding-left: 2px; align-self: flex-start; padding-top: 2px; }
.active span { flex: 1; text-align: center; }

/* control bar */
.control { position: absolute; left: 0; top: 237px; width: 130px; height: 804px; }
.bar-panel { position: absolute; left: 0; top: 0; width: 100px; height: 804px; background: #7184a4; border-radius: 0 20px 20px 0; box-shadow: 12px 12px 0 rgba(0,0,0,.5); padding: 20px 0 0 10px; display: flex; flex-direction: column; gap: 20px; }
.handle { position: absolute; left: 100px; top: 70px; width: 30px; height: 100px; background: #57627c; border-radius: 0 10px 10px 0; box-shadow: 6px 6px 0 rgba(0,0,0,.5); }
.logo { height: 44px; display: flex; flex-direction: column; font-weight: 700; }
.no { color: #288000; font-size: 28px; line-height: 20px; height: 20px; margin-top: -1px; text-shadow: 2px 2px 0 #000; letter-spacing: -2px; }
.vnc { color: #ff0; font-size: 26.500px; line-height: 24px; margin-top: 2px; text-shadow: 2px 2px 0 #000; font-weight: 400; -webkit-text-stroke: 1.500px #ff0; letter-spacing: 5px; }
.vbtn { width: 70px; height: 70px; border: 2px solid rgba(255,255,255,.2); border-radius: 12px; display: flex; align-items: center; justify-content: center; flex: none; }
.vbtn.on { background: #5a6a83; border-color: #3a4353; }
.gear-hole { fill: #66769a; }
.keya { font: 700 20px "Open Sans", sans-serif; text-anchor: middle; fill: #fff; }

/* settings dialog */
.settings { position: absolute; left: 150px; top: 403px; width: 321px; height: 472px; border: 4px solid #e0e0e0; border-radius: 22px; background: #fff; box-shadow: 12px 12px 0 rgba(0,0,0,.5); padding: 30px; font: 32px "Liberation Sans", Arial, sans-serif; color: #000; }
.settings h1 { margin: 0 0 19px; height: 70px; border-radius: 10px; background: #7184a4; color: #fff; font-weight: 400; font-size: 40px; display: flex; align-items: center; gap: 5px; padding: 4px 0 0 16px; }
.settings h1 svg { margin-top: -4px; }
.settings label { display: flex; align-items: center; height: 40px; gap: 5px; padding: 3px 0 0 8px; white-space: nowrap; }
.off { color: #808080; }
.box { width: 26px; height: 26px; border: 2px solid #767676; border-radius: 4px; background: #fff; margin-top: -3px; }
.box.on { border: 0; background: #d1d1d1; display: flex; align-items: center; justify-content: center; }
.box.on::after { content: ""; width: 20px; height: 20px; background: #f2f2f2; clip-path: polygon(0 55%, 15% 42%, 35% 62%, 82% 5%, 97% 18%, 36% 92%); }
.settings hr { border: 0; height: 2px; background: #c0c0c0; margin: 17px 0 15px; }
.mode { line-height: 38px; }
.select { width: 215px; height: 44px; margin: 4px 0 0 4px; border: 2px solid #b8b8b8; border-bottom-width: 4px; border-radius: 10px; background: linear-gradient(#eee, #fff); font-size: 26.670px; line-height: 38px; padding-left: 4px; }
.settings hr.second { margin: 20px 0 14px; }
.advanced { display: flex; align-items: center; gap: 8px; height: 40px; }
.advanced svg { margin-top: 4px; }
.cursor { position: absolute; left: 489px; top: 688px; }
```
